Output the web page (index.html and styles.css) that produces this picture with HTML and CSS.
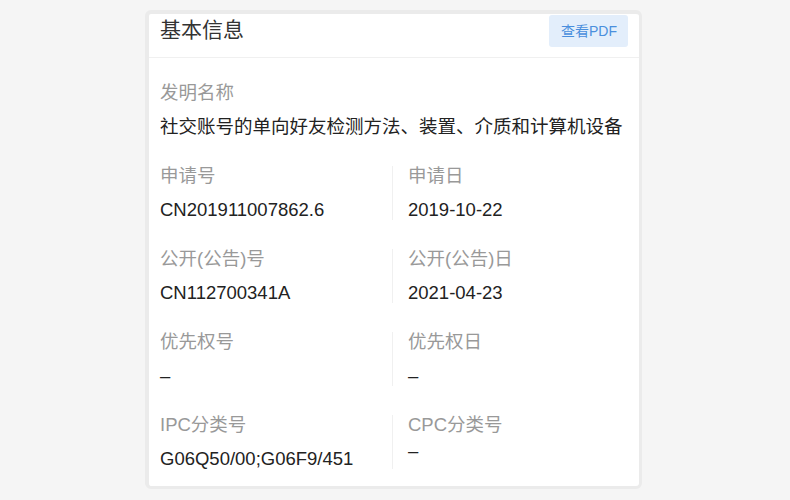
FILE: index.html
```html
<!DOCTYPE html>
<html lang="zh-CN">
<head>
    <meta charset="UTF-8">
    <title>基本信息</title>
    <link rel="stylesheet" href="styles.css">
</head>
<body>
<div class="card">
    <div class="card-head">
        <h2 class="card-title">基本信息</h2>
        <a href="javascript:" class="btn-pdf">查看PDF</a>
    </div>
    <div class="card-body">
        <div class="field">
            <div class="label">发明名称</div>
            <div class="value">社交账号的单向好友检测方法、装置、介质和计算机设备</div>
        </div>
        <div class="pair">
            <div class="field">
                <div class="label">申请号</div>
                <div class="value">CN201911007862.6</div>
            </div>
            <div class="field">
                <div class="label">申请日</div>
                <div class="value">2019-10-22</div>
            </div>
        </div>
        <div class="pair">
            <div class="field">
                <div class="label">公开(公告)号</div>
                <div class="value">CN112700341A</div>
            </div>
            <div class="field">
                <div class="label">公开(公告)日</div>
                <div class="value">2021-04-23</div>
            </div>
        </div>
        <div class="pair">
            <div class="field">
                <div class="label">优先权号</div>
                <div class="value">–</div>
            </div>
            <div class="field">
                <div class="label">优先权日</div>
                <div class="value">–</div>
            </div>
        </div>
        <div class="pair">
            <div class="field">
                <div class="label">IPC分类号</div>
                <div class="value">G06Q50/00;G06F9/451</div>
            </div>
            <div class="field">
                <div class="label">CPC分类号</div>
                <div class="value value-up">–</div>
            </div>
        </div>
    </div>
</div>
</body>
</html>
```

FILE: styles.css
```css
*{
    padding: 0;
    margin: 0;
    box-sizing: border-box;
    text-decoration: none;
}
body{
    background: #f5f5f5;
    font-family: "Liberation Sans", "Noto Sans CJK SC", sans-serif;
    color: #333;
}
.card{
    width: 497px;
    margin: 10px 0 0 145px;
    background: #fff;
    border-style: solid;
    border-color: #ebebeb;
    border-width: 4px 3px 3px 4px;
    border-radius: 6px;
}
.card-head{
    display: flex;
    justify-content: space-between;
    align-items: center;
    padding: 1px 11px 10px;
    border-bottom: 1px solid #f0f0f0;
}
.card-title{
    font-size: 21px;
    font-weight: normal;
    color: #333;
    line-height: 28px;
    margin-top: -3px;
}
.btn-pdf{
    display: block;
    height: 32px;
    line-height: 32px;
    padding: 0 11px 0 12px;
    font-size: 14px;
    color: #4a8fdd;
    background: #e3eefb;
    border-radius: 3px;
}
.card-body{
    display: flex;
    flex-direction: column;
    gap: 29px;
    padding: 25px 11px 17px;
}
.pair{
    display: grid;
    grid-template-columns: 232px 1fr;
}
.pair .field + .field{
    border-left: 1px solid #f0f0f0;
    padding-left: 15px;
}
.label{
    font-size: 18.5px;
    line-height: 20px;
    color: #999;
}
.value{
    font-size: 18.5px;
    line-height: 20px;
    margin-top: 14px;
    color: #222;
}
.value-up{
    margin-top: 6px;
}
```
